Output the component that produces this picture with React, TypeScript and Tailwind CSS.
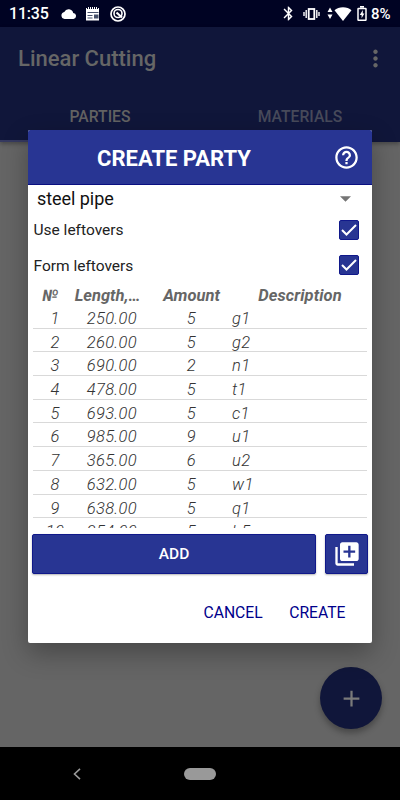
import { MdAdd, MdBluetooth, MdHelpOutline, MdLibraryAdd, MdMoreVert } from "react-icons/md"

const parts = [
  { id: 1, length: "250.00", amount: 5, description: "g1" },
  { id: 2, length: "260.00", amount: 5, description: "g2" },
  { id: 3, length: "690.00", amount: 2, description: "n1" },
  { id: 4, length: "478.00", amount: 5, description: "t1" },
  { id: 5, length: "693.00", amount: 5, description: "c1" },
  { id: 6, length: "985.00", amount: 9, description: "u1" },
  { id: 7, length: "365.00", amount: 6, description: "u2" },
  { id: 8, length: "632.00", amount: 5, description: "w1" },
  { id: 9, length: "638.00", amount: 5, description: "q1" },
  { id: 10, length: "254.00", amount: 5, description: "h5" },
]

function StatusBar() {
  return (
    <div className="flex h-[27px] shrink-0 items-center bg-[#000323] pl-[9px] pr-[9px] text-white">
      <span className="w-[40px] whitespace-nowrap pt-[1px] text-[16px] font-medium leading-[26px] tracking-[-0.2px]">11:35</span>
      <svg className="ml-[12px] h-[10px] w-[15px]" viewBox="0 0 15 10" fill="currentColor">
        <path d="M12.2 4A4.7 4.7 0 0 0 3.3 2.9 3.6 3.6 0 0 0 3.6 10h8.2A3 3 0 0 0 12.2 4z" />
      </svg>
      <svg className="ml-[10px] h-[14px] w-[14px]" viewBox="0 0 14 14">
        <path d="M0 1h1v1h1V0h1v2h1V0h1v2h1V0h1v2h1V0h1v2h1V0h1v2h1V1h1v12.5H0z" fill="white" />
        <path d="M1.5 5h11v1h-11zM1.5 8h5v1h-5zM1.5 10.5h5v1h-5zM8 7.5h4.500v4H8z" fill="#46506a" />
      </svg>
      <svg className="ml-[10px] h-[16px] w-[16px]" viewBox="0 0 16 16" fill="none" stroke="white">
        <circle cx="8" cy="8" r="7" strokeWidth="1.7" />
        <circle cx="8" cy="7.500" r="4" strokeWidth="1.6" />
        <path d="M6.500 6.500l5.500 5" strokeWidth="2.200" />
      </svg>

      <div className="ml-auto flex items-center">
        <MdBluetooth className="h-[17px] w-[17px]" />
        <svg className="ml-[6px] h-[12px] w-[17px]" viewBox="0 0 17 12" fill="none" stroke="white">
          <rect x="5.700" y="1" width="5.600" height="10" strokeWidth="1.800" />
          <path d="M3.200 2v8M13.800 2v8" strokeWidth="1.400" />
          <path d="M1 4v4M16 4v4" strokeWidth="1.400" />
        </svg>
        <svg className="ml-[7px] h-[14px] w-[25px]" viewBox="0 0 25 14" fill="white">
          <path d="M0.500 5l2.500-4.500L5.500 5zM0.500 7.500h5L3 12z" />
          <path d="M7.500 3.200C11.500-.8 20.500-.8 24.500 3.200L16 14z" />
        </svg>
        <svg className="ml-[5px] h-[15px] w-[10px]" viewBox="0 0 10 14" fill="none" stroke="white" preserveAspectRatio="none">
          <path d="M3 .8h4" strokeWidth="1.600" />
          <rect x="1" y="2.300" width="8" height="11" rx=".5" strokeWidth="1.500" />
          <path d="M5.800 3.800L2.800 8.300h1.800v3.200l2.800-4.500H5.800z" fill="white" stroke="none" />
        </svg>
        <span className="ml-[4px] w-[20px] whitespace-nowrap pt-[1px] text-[15px] font-medium leading-[26px] tracking-[-0.1px]">8%</span>
      </div>
    </div>
  )
}

function CheckRow({ label }: { label: string }) {
  return (
    <div className="flex h-[35.500px] items-center justify-between pl-[5.500px] pr-[13px]">
      <span className="pt-[1px] text-[15.500px] leading-[20px] text-[#222]">{label}</span>
      <div className="flex h-[20px] w-[20px] items-center justify-center rounded-[2px] border border-[#10188a] bg-[#283593]">
        <svg className="h-[14px] w-[16px]" viewBox="0 0 16 14" fill="none" stroke="white" strokeWidth="2">
          <path d="M1 7l4.500 4.500L15 2" />
        </svg>
      </div>
    </div>
  )
}

function CreatePartyDialog() {
  return (
    <div className="flex h-[513px] w-[344px] flex-col overflow-hidden rounded-[2px] bg-white shadow-[0_10px_26px_rgba(0,0,0,0.3)]">
      <div className="flex h-[55px] shrink-0 items-center border-b border-[#0a0f80] bg-[#283593] pr-[12px] text-white">
        <h2 className="flex-1 pr-[13px] pt-[3px] text-center text-[22px] font-bold leading-[28px]">CREATE PARTY</h2>
        <MdHelpOutline className="h-[27px] w-[27px]" />
      </div>

      <div className="flex h-[27px] shrink-0 items-center justify-between pl-[9px] pr-[21px]">
        <span className="pt-[1px] text-[18px] leading-[24px] tracking-[-0.05px] text-[#111]">steel pipe</span>
        <svg className="h-[6px] w-[11px]" viewBox="0 0 11 6" fill="#757575">
          <path d="M0 .3h11L5.500 5.800z" />
        </svg>
      </div>

      <CheckRow label="Use leftovers" />
      <CheckRow label="Form leftovers" />

      {/* Parts table */}
      <div className="grid h-[22px] shrink-0 grid-cols-[34px_81px_87px_1fr] items-center px-[5px] pt-[2px] text-center text-[16.500px] font-bold italic leading-[22px] text-[#666]">
        <span className="text-[16px]">№</span>
        <span>Length,…</span>
        <span>Amount</span>
        <span className="pr-[2px] tracking-[0.1px]">Description</span>
      </div>
      <div className="h-[223px] shrink-0 overflow-hidden px-[5px]">
        {parts.map((part) => (
          <div
            key={part.id}
            className="grid h-[23.700px] grid-cols-[44px_60px_59px_1fr] items-center border-b border-[#d9d9d9] pt-[4px] text-right text-[16.500px] font-light italic leading-[19px] tracking-[0.35px] text-[#333]"
          >
            <span className="text-center">{part.id}</span>
            <span>{part.length}</span>
            <span>{part.amount}</span>
            <span className="pl-[36px] text-left">{part.description}</span>
          </div>
        ))}
      </div>

      <div className="mt-[6px] flex h-[40px] shrink-0 gap-[9px] pl-[4px] pr-[4px]">
        <button className="flex-1 rounded-[2px] border border-[#10188a] bg-[#283593] pt-[2px] text-[15.500px] font-medium text-white shadow-[0_1px_2px_rgba(0,0,0,0.3)]">
          ADD
        </button>
        <button className="flex w-[43px] items-center justify-center rounded-[2px] border border-[#10188a] bg-[#283593] text-white shadow-[0_1px_2px_rgba(0,0,0,0.3)]">
          <MdLibraryAdd className="h-[28px] w-[28px]" />
        </button>
      </div>

      <div className="mt-[28px] flex justify-end gap-[26.500px] pr-[26.500px] text-[15.700px] leading-[22px] text-[#00008b]">
        <button>CANCEL</button>
        <button>CREATE</button>
      </div>
    </div>
  )
}

export default function App() {
  return (
    <div className="relative flex h-[800px] w-[400px] flex-col overflow-hidden bg-[#656565] font-[Roboto,sans-serif]">
      <StatusBar />

      <header className="flex h-[115px] shrink-0 flex-col bg-[#10163a] shadow-[0_2px_4px_rgba(0,0,0,0.3)]">
        <div className="flex h-[63px] items-center justify-between pl-[18px] pr-[11px]">
          <h1 className="pt-[1px] text-[22px] font-medium leading-[28px] text-[#666]">Linear Cutting</h1>
          <MdMoreVert className="h-[27px] w-[27px] text-[#666]" />
        </div>
        <div className="grid flex-1 grid-cols-2 text-center text-[15.700px] font-medium leading-[20px]">
          <div className="border-b-2 border-[#35395f] pt-[17px] text-[#626262]">PARTIES</div>
          <div className="pt-[17px] text-[#474a5a]">MATERIALS</div>
        </div>
      </header>

      <main className="flex flex-1 items-end justify-end pb-[18px] pr-[18px]">
        <div className="flex h-[62px] w-[62px] items-center justify-center rounded-full bg-[#10163a] shadow-[0_4px_6px_rgba(0,0,0,0.3)]">
          <MdAdd className="h-[27px] w-[27px] text-[#7a7a7a]" />
        </div>
      </main>

      <nav className="grid h-[53px] shrink-0 grid-cols-[153px_94px_153px] items-center justify-items-center bg-black">
        <svg className="h-[12px] w-[8px]" viewBox="0 0 8 12" fill="none" stroke="#999" strokeWidth="1.600">
          <path d="M7 .8L1.500 6 7 11.200" />
        </svg>
        <span className="h-[12px] w-[32px] rounded-full bg-[#999]" />
      </nav>

      <div className="absolute inset-x-0 top-[130px] flex justify-center">
        <CreatePartyDialog />
      </div>
    </div>
  )
}
